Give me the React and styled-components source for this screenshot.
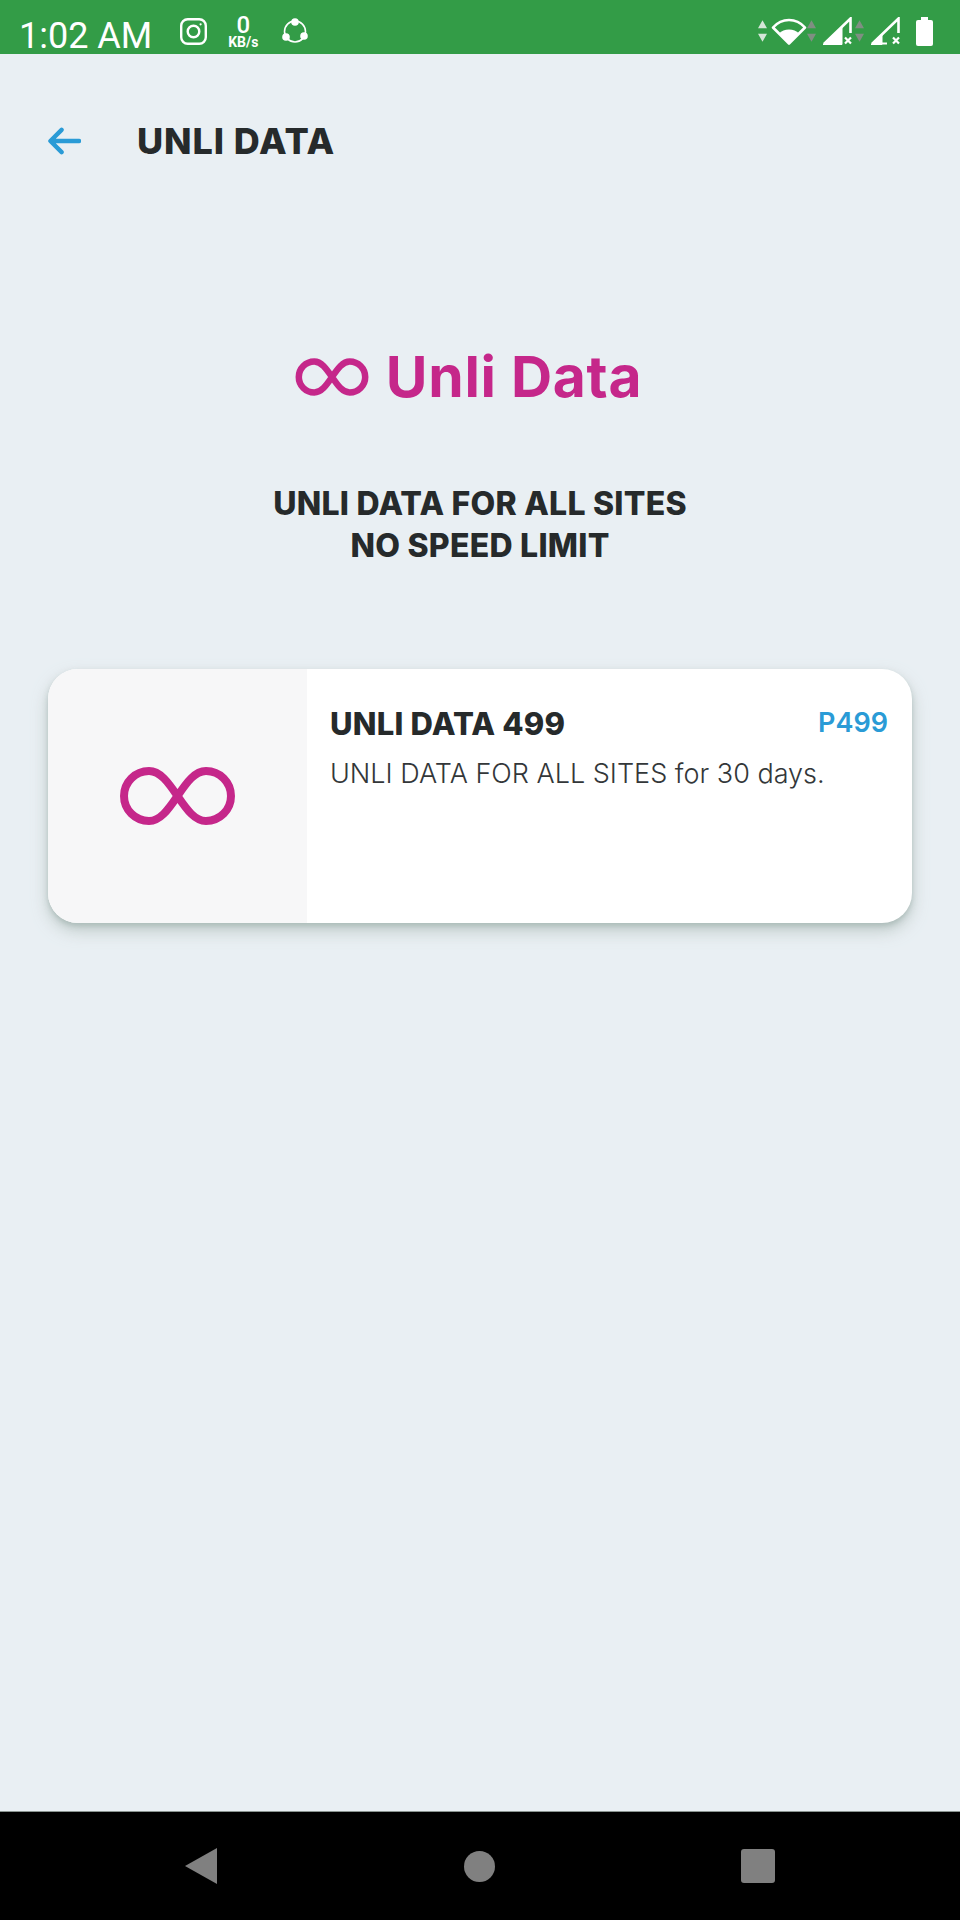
import React from 'react';
import styled, { createGlobalStyle } from 'styled-components';

const INFINITY_PATH =
  'M57.5 29C48 15 40 4 29 4a25 25 0 0 0 0 50c11 0 19-11 28.5-25C67 15 75 4 86 4a25 25 0 0 1 0 50C75 54 67 43 57.5 29Z';

function InfinityMark({ width, height, weight }) {
  return (
    <svg width={width} height={height} viewBox="0 0 115 58" fill="none" stroke="#c5278a" strokeWidth={weight} overflow="visible">
      <path d={INFINITY_PATH} />
    </svg>
  );
}

function ArrowPair({ color }) {
  return (
    <svg width="9" height="28" viewBox="0 0 10 28" fill={color}>
      <path d="M5 2l5 9H0zM0 17h10l-5 9z" />
    </svg>
  );
}

function SignalIcon({ level }) {
  const slope = 27 - (level - 1) * (26 / 27);
  return (
    <svg width="29" height="28" viewBox="0 0 29 28" fill="none">
      <path d="M1 27L27.500 1.500V16" stroke="#fff" strokeWidth="2.6" />
      <path d={`M0 27.500L${level} ${slope}V27.500z`} fill="#fff" stroke="#fff" strokeWidth="1" />
      <path d="M1 26.500H16" stroke="#fff" strokeWidth="2" />
      <path d="M22 20.500l6 6M28 20.500l-6 6" stroke="#fff" strokeWidth="2.2" />
    </svg>
  );
}

export default function App() {
  return (
    <>
      <GlobalStyle />
      <Page>
        <StatusBar>
          <StatusGroup>
            <Clock>1:02 AM</Clock>
            <StatusSlot $left={28}>
              <svg width="27" height="27" viewBox="0 0 27 27" fill="none" stroke="#fff" strokeWidth="2.4">
                <rect x="1.2" y="1.2" width="24.6" height="24.6" rx="6.5" />
                <circle cx="13.5" cy="13.5" r="5.8" />
                <circle cx="20.6" cy="6.3" r="1.1" fill="#fff" stroke="none" />
              </svg>
            </StatusSlot>
            <NetSpeed>
              <NetValue>0</NetValue>
              <NetUnit>KB/s</NetUnit>
            </NetSpeed>
            <StatusSlot $left={22}>
              <svg width="26" height="26" viewBox="0 0 26 26" fill="none" stroke="#fff" strokeWidth="1.6">
                <circle cx="13" cy="13.500" r="10.500" />
                <circle cx="13" cy="4" r="3.8" fill="#fff" stroke="none" />
                <circle cx="4" cy="19" r="3.8" fill="#fff" stroke="none" />
                <circle cx="22" cy="18" r="3.8" fill="#fff" stroke="none" />
              </svg>
            </StatusSlot>
          </StatusGroup>
          <StatusGroup>
            <ArrowPair color="#d5e6d8" />
            <StatusSlot $left={4}>
              <svg width="36" height="27" viewBox="0 0 36 27" fill="none">
                <path d="M18 25.500L2 9.500C6 5 11.500 2 18 2s12 3 16 7.500z" stroke="#fff" strokeWidth="2.6" strokeLinejoin="round" />
                <path d="M18 26L8 15.500C10.500 13 14 11.500 18 11.500s7.500 1.500 10 4z" fill="#fff" />
              </svg>
            </StatusSlot>
            <ArrowPair color="#7f8f82" />
            <StatusSlot $left={7}>
              <SignalIcon level={19} />
            </StatusSlot>
            <StatusSlot $left={3}>
              <ArrowPair color="#7f8f82" />
            </StatusSlot>
            <StatusSlot $left={7}>
              <SignalIcon level={11} />
            </StatusSlot>
            <Battery />
          </StatusGroup>
        </StatusBar>

        <Main>
          <Header>
            <BackButton aria-label="Back">
              <svg width="33" height="28" viewBox="0 0 34 28" fill="none" stroke="#2a9bd6" strokeWidth="4.500" strokeLinecap="round" strokeLinejoin="round">
                <path d="M32 14H3M14 2.500L2.500 14 14 25.500" />
              </svg>
            </BackButton>
            <HeaderTitle>UNLI DATA</HeaderTitle>
          </Header>

          <Logo>
            <InfinityMark width={72} height={36} weight={10.5} />
            <LogoText>Unli Data</LogoText>
          </Logo>

          <Tagline>
            UNLI DATA FOR ALL SITES
            <br />
            NO SPEED LIMIT
          </Tagline>

          <PlanCard>
            <PlanThumb>
              <InfinityMark width={115} height={58} weight={8} />
            </PlanThumb>
            <PlanBody>
              <PlanTop>
                <PlanName>UNLI DATA 499</PlanName>
                <PlanPrice>P499</PlanPrice>
              </PlanTop>
              <PlanDesc>UNLI DATA FOR ALL SITES for 30 days.</PlanDesc>
            </PlanBody>
          </PlanCard>
        </Main>

        <NavBar>
          <NavBack />
          <NavHome />
          <NavRecent />
        </NavBar>
      </Page>
    </>
  );
}

const GlobalStyle = createGlobalStyle`
  html, body {
    margin: 0;
    padding: 0;
  }

  body {
    font-family: Inter, "Liberation Sans", sans-serif;
  }
`;

const Page = styled.div`
  display: flex;
  flex-direction: column;
  width: 960px;
  height: 1920px;
  overflow: hidden;
  background-color: #e9eff3;
`;

const StatusBar = styled.div`
  display: flex;
  flex: none;
  justify-content: space-between;
  align-items: center;
  box-sizing: border-box;
  height: 54px;
  padding: 8px 27px 0 19px;
  background-color: #339c47;
`;

const StatusGroup = styled.div`
  display: flex;
  align-items: center;
`;

const StatusSlot = styled.div`
  display: flex;
  margin-left: ${({ $left }) => $left}px;
`;

const Clock = styled.span`
  margin-top: 10px;
  color: #fff;
  font-family: Roboto, sans-serif;
  font-size: 36px;
  line-height: 36px;
`;

const NetSpeed = styled.div`
  display: flex;
  flex-direction: column;
  align-items: center;
  width: 34px;
  margin-left: 19px;
  color: #fff;
  font-family: Roboto, sans-serif;
  font-weight: 700;
`;

const NetValue = styled.span`
  font-size: 24px;
  font-weight: 500;
  line-height: 22px;
`;

const NetUnit = styled.span`
  font-size: 14px;
  line-height: 12px;
`;

const Battery = styled.div`
  position: relative;
  width: 17px;
  height: 26px;
  margin: 3px 0 0 16px;
  border-radius: 2px;
  background-color: #fff;

  &::before {
    content: '';
    position: absolute;
    top: -3px;
    left: 5px;
    width: 7px;
    height: 3px;
    background-color: #fff;
  }
`;

const Main = styled.main`
  display: flex;
  flex: 1;
  flex-direction: column;
  padding: 0 48px;
`;

const Header = styled.header`
  display: flex;
  align-items: center;
  margin-top: 65px;
`;

const BackButton = styled.button`
  display: flex;
  width: 89px;
  padding: 0;
  border: 0;
  background: none;
`;

const HeaderTitle = styled.h1`
  margin: 0;
  color: #262a2b;
  font-size: 36px;
  font-weight: 800;
  letter-spacing: 0.9px;
  line-height: 44px;
`;

const Logo = styled.div`
  display: flex;
  justify-content: center;
  align-items: center;
  gap: 18px;
  margin-top: 182px;
  padding-right: 22px;
`;

const LogoText = styled.span`
  color: #c5278a;
  font-size: 57px;
  font-weight: 700;
  letter-spacing: 0.7px;
  line-height: 64px;
`;

const Tagline = styled.p`
  margin: 74px 0 0;
  color: #262a2b;
  font-size: 32px;
  font-weight: 800;
  letter-spacing: 0.25px;
  line-height: 42px;
  text-align: center;
`;

const PlanCard = styled.section`
  display: flex;
  height: 254px;
  margin-top: 102px;
  border-radius: 30px;
  overflow: hidden;
  background-color: #fff;
  box-shadow: 0 3px 5px rgba(150, 170, 165, 0.5), 0 8px 16px rgba(175, 190, 185, 0.7);
`;

const PlanThumb = styled.div`
  display: flex;
  flex: none;
  justify-content: center;
  align-items: center;
  width: 259px;
  background-color: #f7f7f8;
`;

const PlanBody = styled.div`
  flex: 1;
  padding: 35px 24px 0 23px;
`;

const PlanTop = styled.div`
  display: flex;
  justify-content: space-between;
  align-items: flex-start;
`;

const PlanName = styled.h2`
  margin: 0;
  color: #262a2b;
  font-size: 31px;
  font-weight: 800;
  letter-spacing: 0.2px;
  line-height: 40px;
`;

const PlanPrice = styled.span`
  margin-top: 1px;
  color: #2a9bd6;
  font-size: 27px;
  font-weight: 600;
  line-height: 36px;
`;

const PlanDesc = styled.p`
  margin: 11px 0 0;
  color: #333739;
  font-size: 27px;
  font-weight: 300;
  line-height: 38px;
`;

const NavBar = styled.nav`
  display: flex;
  flex: none;
  justify-content: space-between;
  align-items: center;
  height: 108px;
  padding: 0 185px;
  border-top: 1px solid #8a9490;
  background-color: #000;
`;

const NavBack = styled.div`
  width: 32px;
  height: 36px;
  background-color: #808080;
  clip-path: polygon(100% 0, 100% 100%, 0 50%);
`;

const NavHome = styled.div`
  width: 31px;
  height: 31px;
  border-radius: 50%;
  background-color: #808080;
`;

const NavRecent = styled.div`
  width: 34px;
  height: 34px;
  border-radius: 3px;
  background-color: #808080;
`;
